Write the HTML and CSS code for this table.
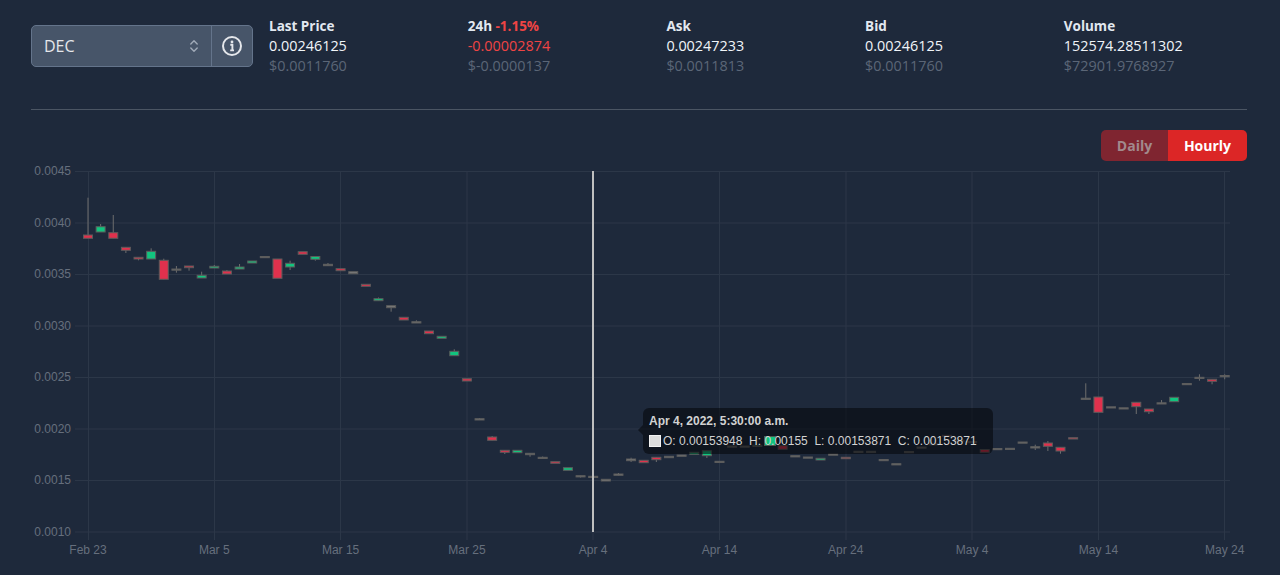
FILE: index.html
```html
<!DOCTYPE html>
<html lang="en">
<head>
<meta charset="utf-8">
<title>DEC Chart</title>
<link rel="stylesheet" href="styles.css">
</head>
<body>
<div class="page">
  <header class="top">
    <div class="picker">
      <div class="select">
        <span class="sym">DEC</span>
        <svg class="chev" width="10" height="16" viewBox="0 0 10 16"><path d="M1.8 6 L5 2.8 L8.2 6 M1.8 10 L5 13.2 L8.2 10" fill="none" stroke="#a0aab8" stroke-width="1.4" stroke-linecap="round" stroke-linejoin="round"/></svg>
      </div>
      <div class="info">
        <svg width="22" height="22" viewBox="0 0 22 22"><circle cx="11" cy="11" r="9" fill="none" stroke="#e5e7eb" stroke-width="2"/><circle cx="11" cy="6.9" r="1.4" fill="#e5e7eb"/><path d="M9.3 9.8 H11.4 V15.4 M9.2 15.4 H13" fill="none" stroke="#e5e7eb" stroke-width="1.9"/></svg>
      </div>
    </div>
    <div class="stats">
      <div class="stat"><div class="label">Last Price</div><div class="val">0.00246125</div><div class="usd">$0.0011760</div></div>
      <div class="stat"><div class="label">24h <span class="neg">-1.15%</span></div><div class="val neg">-0.00002874</div><div class="usd">$-0.0000137</div></div>
      <div class="stat"><div class="label">Ask</div><div class="val">0.00247233</div><div class="usd">$0.0011813</div></div>
      <div class="stat"><div class="label">Bid</div><div class="val">0.00246125</div><div class="usd">$0.0011760</div></div>
      <div class="stat"><div class="label">Volume</div><div class="val">152574.28511302</div><div class="usd">$72901.9768927</div></div>
    </div>
  </header>
  <div class="divider"></div>
  <div class="toolbar">
    <div class="toggle"><button class="btn daily">Daily</button><button class="btn hourly">Hourly</button></div>
  </div>
  <div class="chart">
    <svg id="chart" class="plot" width="1216" height="400" viewBox="31 162 1216 400">
      <g class="grid">
        <line x1="75" y1="171.5" x2="1230" y2="171.5"/>
        <line x1="75" y1="223" x2="1230" y2="223"/>
        <line x1="75" y1="274.5" x2="1230" y2="274.5"/>
        <line x1="75" y1="326" x2="1230" y2="326"/>
        <line x1="75" y1="377.5" x2="1230" y2="377.5"/>
        <line x1="75" y1="429" x2="1230" y2="429"/>
        <line x1="75" y1="480.5" x2="1230" y2="480.5"/>
        <line x1="75" y1="532" x2="1230" y2="532"/>
        <line x1="88.5" y1="171" x2="88.5" y2="540"/>
        <line x1="214.5" y1="171" x2="214.5" y2="540"/>
        <line x1="340.5" y1="171" x2="340.5" y2="540"/>
        <line x1="467" y1="171" x2="467" y2="540"/>
        <line x1="593" y1="171" x2="593" y2="540"/>
        <line x1="719.5" y1="171" x2="719.5" y2="540"/>
        <line x1="846" y1="171" x2="846" y2="540"/>
        <line x1="972" y1="171" x2="972" y2="540"/>
        <line x1="1098.5" y1="171" x2="1098.5" y2="540"/>
        <line x1="1224.5" y1="171" x2="1224.5" y2="540"/>
      </g>
      <g class="ylab">
        <text x="71" y="175">0.0045</text>
        <text x="71" y="226.6">0.0040</text>
        <text x="71" y="278.1">0.0035</text>
        <text x="71" y="329.7">0.0030</text>
        <text x="71" y="381.3">0.0025</text>
        <text x="71" y="432.9">0.0020</text>
        <text x="71" y="484.4">0.0015</text>
        <text x="71" y="536">0.0010</text>
      </g>
      <g class="xlab">
        <text x="88" y="553.5">Feb 23</text>
        <text x="214.3" y="553.5">Mar 5</text>
        <text x="340.6" y="553.5">Mar 15</text>
        <text x="466.9" y="553.5">Mar 25</text>
        <text x="593.2" y="553.5">Apr 4</text>
        <text x="719.5" y="553.5">Apr 14</text>
        <text x="845.8" y="553.5">Apr 24</text>
        <text x="972.1" y="553.5">May 4</text>
        <text x="1098.4" y="553.5">May 14</text>
        <text x="1224.7" y="553.5">May 24</text>
      </g>
      <g id="candles"></g>
      <line class="cross" x1="593" y1="171" x2="593" y2="532"/>
    </svg>
    <div class="tooltip">
      <span class="hl"></span>
      <div class="tt-title">Apr 4, 2022, 5:30:00 a.m.</div>
      <div class="tt-row"><span class="swatch"></span><span class="tt-text">O: 0.00153948  H: 0.00155  L: 0.00153871  C: 0.00153871</span></div>
    </div>
  </div>
</div>
<script src="script.js"></script>
</body>
</html>
```

FILE: styles.css
```css
* { box-sizing: border-box; }
html, body { margin: 0; padding: 0; }
body {
  background: #1e293b;
  font-family: "Open Sans", "Noto Sans", sans-serif;
  color: #e2e8f0;
  width: 1280px;
  height: 575px;
  overflow: hidden;
}
.page {
  padding: 0 33px 0 31px;
}
.top {
  display: flex;
  align-items: center;
  padding-top: 16px;
}
.picker {
  display: flex;
  width: 222px;
  height: 42px;
  background: #475569;
  border: 1px solid #64748b;
  border-radius: 5px;
  margin-right: 16px;
  flex: none;
}
.select {
  flex: 1;
  display: flex;
  align-items: center;
  justify-content: space-between;
  padding: 0 12px 0 12px;
}
.sym {
  font-size: 16px;
  color: #e5e7eb;
}
.chev { display: block; }
.info {
  width: 41px;
  border-left: 1px solid #64748b;
  display: flex;
  align-items: center;
  justify-content: center;
}
.info svg { display: block; }
.stats {
  display: flex;
}
.stat {
  width: 198.7px;
  line-height: 20px;
}
.label {
  font-size: 13.5px;
  font-weight: 700;
  color: #e2e8f0;
}
.val {
  font-size: 14.4px;
  color: #f1f5f9;
}
.usd {
  font-size: 14.4px;
  color: #5b6677;
}
.neg { color: #ef4444; }
.divider {
  height: 1px;
  background: #4b5563;
  margin-top: 33px;
}
.toolbar {
  display: flex;
  justify-content: flex-end;
  margin-top: 20px;
}
.toggle {
  display: flex;
  height: 31px;
  border-radius: 5px;
  overflow: hidden;
}
.btn {
  border: 0;
  margin: 0;
  padding: 0;
  font-family: "Open Sans", sans-serif;
  font-weight: 700;
  font-size: 14px;
  height: 31px;
  cursor: pointer;
}
.daily {
  width: 67px;
  background: #7f2530;
  color: #a2898d;
}
.hourly {
  width: 79px;
  background: #dc2626;
  color: #ffffff;
}
.chart {
  position: relative;
  margin-top: 1px;
  height: 413px;
}
.plot { display: block; }
.grid line {
  stroke: #2c3748;
  stroke-width: 1;
}
.ylab text, .xlab text {
  font-family: "Liberation Sans", Arial, sans-serif;
  font-size: 12px;
  fill: #666f7d;
}
.ylab text { text-anchor: end; }
.xlab text { text-anchor: middle; }
.cross {
  stroke: #bfbfbf;
  stroke-width: 2;
}
.wick {
  stroke: #6e6e6e;
  stroke-width: 1;
}
.body {
  stroke: #5c5c5c;
  stroke-width: 1;
}
.body.g { fill: #12c47f; }
.body.r { fill: #e0314d; }
.body.n { fill: #7d7d7d; }
.tooltip {
  position: absolute;
  left: 612px;
  top: 246px;
  width: 350px;
  height: 46px;
  background: rgba(4, 6, 10, 0.55);
  border-radius: 6px;
  padding: 6px 6px;
  font-family: "Liberation Sans", Arial, sans-serif;
  font-size: 12px;
  color: #d2d2d2;
}
.tooltip::before {
  content: "";
  position: absolute;
  left: -5px;
  top: 17px;
  border-top: 5px solid transparent;
  border-bottom: 5px solid transparent;
  border-right: 5px solid rgba(4, 6, 10, 0.55);
}
.hl {
  position: absolute;
  left: 122px;
  top: 28.7px;
  width: 10px;
  height: 8.5px;
  background: #12c47f;
  outline: 1px solid #4a5a50;
}
.tt-title {
  position: relative;
  font-weight: 700;
  line-height: 14px;
  margin-bottom: 6px;
}
.tt-row {
  position: relative;
  display: flex;
  align-items: center;
  height: 14px;
}
.swatch {
  width: 12px;
  height: 12px;
  background: #dcdcdc;
  border: 1px solid #f2f2f2;
  margin-right: 2px;
  flex: none;
}
.tt-text {
  white-space: pre;
  line-height: 14px;
}
```

FILE: script.js
```js
(function () {
  var data = [
    [235,238.3,197.7,238.3,'r'],[226.7,232,224,232,'g'],[232.7,238.3,215,238.3,'r'],[247.3,250.3,247.3,253,'r'],
    [257.3,259,257.3,260.3,'r'],[251.3,259,248.3,259,'g'],[260.3,279.3,258.7,279.3,'r'],[269,270,266,272.7,'n'],
    [266,267.7,266,270.7,'r'],[275.3,278,271.7,278,'g'],[266.3,268,265,268,'g'],[271,274,270,274,'r'],
    [267,269,264,269,'g'],[261,263,261,263,'g'],[256.5,257.5,0,0,'n'],[259,278.3,0,0,'r'],
    [263.3,267,260.7,270,'g'],[251.7,254.3,0,0,'r'],[256.5,259.3,0,260.7,'g'],[264.3,265.7,263,0,'n'],
    [268.7,270.7,0,0,'r'],[271.7,273.7,0,0,'n'],[284.3,286.3,0,0,'r'],[298.7,300.7,297.5,0,'g'],
    [305.7,307.7,0,311.7,'n'],[317.3,320,0,0,'r'],[321.7,323,320.3,0,'n'],[331,333.7,0,0,'r'],
    [336.3,338.3,0,0,'g'],[351.3,355.7,349.3,0,'g'],[378.7,381,0,0,'r'],[418.7,420,418,0,'n'],
    [437,440.3,436,0,'r'],[450.3,452.3,0,454,'r'],[450.3,452.7,0,0,'g'],[453.3,454.7,0,456.7,'n'],
    [457.3,458.3,456.5,0,'n'],[461.7,463.3,0,0,'r'],[467.7,470.3,0,0,'g'],[475.7,476.7,0,477.5,'n'],
    [476.3,477.3,0,0,'n'],[479.3,481,0,0,'n'],[474,475.3,473,0,'n'],[459,460.7,457.7,462,'n'],
    [460.3,462.7,0,0,'r'],[457.3,459.7,0,462,'r'],[456.3,457.7,0,0,'n'],[455,456.3,0,0,'n'],
    [452.3,454.3,0,0,'g'],[450.7,455.7,0,458,'g'],[461.3,462.3,0,0,'n'],[446,447,0,0,'n'],
    [446,447,0,0,'n'],[445.3,446.3,0,0,'g'],[436.7,445,0,0,'g'],[445.7,449.3,0,0,'r'],
    [455.7,456.7,0,0,'n'],[457,458,0,0,'n'],[458.3,460,0,0,'g'],[454,455,0,0,'n'],
    [457.3,458.7,0,0,'r'],[451.3,452.3,0,0,'n'],[451.3,452.3,0,0,'n'],[459.5,460.5,0,0,'n'],
    [463.7,464.7,0,0,'n'],[451.5,452.5,0,0,'n'],[447,448,0,0,'n'],[443.7,444.7,0,0,'n'],
    [435.3,436.5,0,0,'r'],[440,441,0,0,'n'],[441.5,442.5,0,0,'n'],[449.5,452.3,0,0,'r'],
    [448.5,449.5,0,0,'n'],[448.3,449.3,0,0,'n'],[442,443,0,0,'n'],[446.7,448,444.7,450,'n'],
    [443,446.3,441,451,'r'],[447.3,451,0,453.7,'r'],[437.7,439,0,0,'r'],[398.2,399.2,383.3,0,'n'],
    [397,412.3,0,0,'r'],[406.8,407.8,0,0,'n'],[407.8,408.8,0,0,'n'],[402.3,406.7,0,414,'r'],
    [409,411.7,0,414,'r'],[402.8,403.8,400,0,'n'],[397.3,401.7,0,0,'g'],[383.5,384.5,0,0,'n'],
    [377.3,378.3,374.3,380.7,'n'],[379.3,381.3,0,384.3,'r'],[375.5,376.5,374.3,379.3,'n']
  ];
  var NS = 'http://www.w3.org/2000/svg';
  var g = document.getElementById('candles');
  data.forEach(function (d, i) {
    var cx = 88 + 12.63 * i;
    var top = d[0], bot = d[1];
    var wt = d[2] || top, wb = d[3] || bot;
    if (wt < top || wb > bot) {
      var l = document.createElementNS(NS, 'line');
      l.setAttribute('x1', cx); l.setAttribute('x2', cx);
      l.setAttribute('y1', wt); l.setAttribute('y2', wb);
      l.setAttribute('class', 'wick');
      g.appendChild(l);
    }
    var r = document.createElementNS(NS, 'rect');
    var h = Math.max(bot - top, 1.2);
    r.setAttribute('x', cx - 4.5);
    r.setAttribute('y', top);
    r.setAttribute('width', 9);
    r.setAttribute('height', h);
    r.setAttribute('class', 'body ' + d[4]);
    g.appendChild(r);
  });
})();
```
